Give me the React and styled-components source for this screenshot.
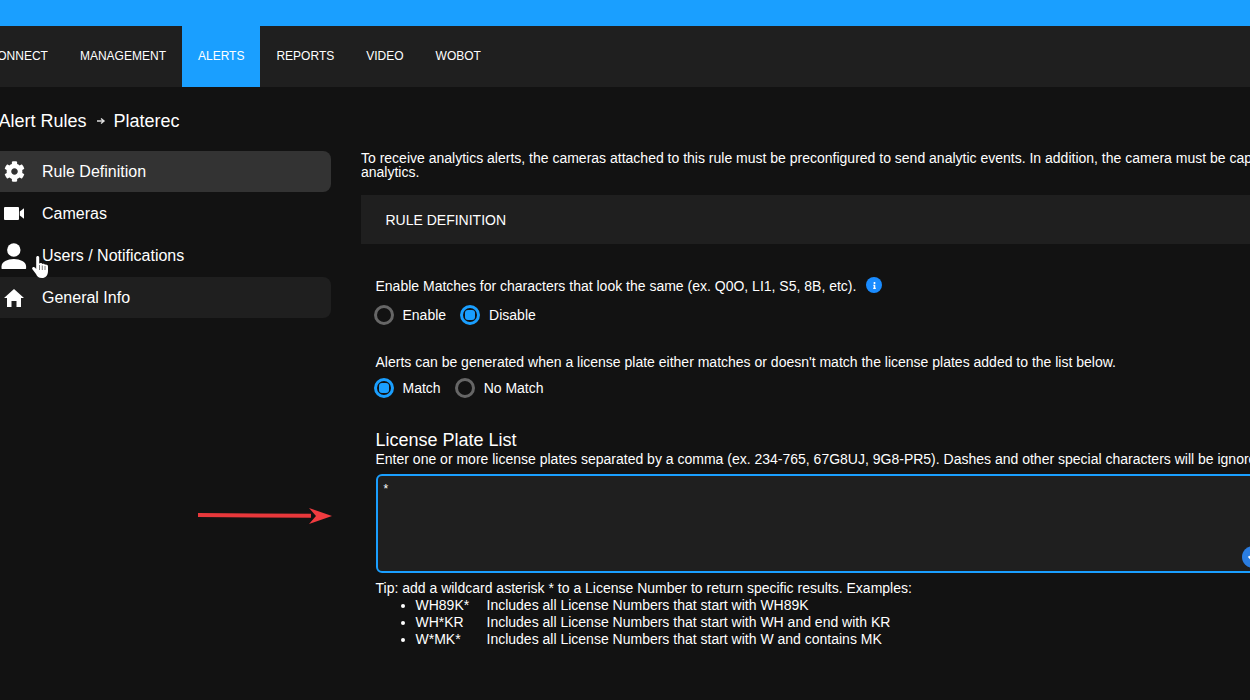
import React from 'react'
import styled, { createGlobalStyle } from 'styled-components'
import { FaCog, FaInfo, FaCheck } from 'react-icons/fa'

const navItems = ['CONNECT', 'MANAGEMENT', 'ALERTS', 'REPORTS', 'VIDEO', 'WOBOT']

const CameraIcon = () => (
  <svg width='20' height='13' viewBox='0 0 20 13' fill='#fff'>
    <rect x='0' y='0' width='15' height='13' rx='1' />
    <path d='M15.8 4.6L20 1.2v10.6L15.8 8.4z' />
  </svg>
)

const PersonIcon = () => (
  <svg width='26' height='26' viewBox='0 0 26 26' fill='#fff'>
    <circle cx='12.8' cy='7' r='6.7' />
    <path d='M.5 25.6v-2.2c0-4.600 6-7.400 12.300-7.400s12.300 2.800 12.300 7.400v2.200c0 .3-.2.4-.5.4H1c-.3 0-.5-.1-.5-.4z' />
  </svg>
)

const HomeIcon = () => (
  <svg width='20' height='18' viewBox='0 0 20 18' fill='#fff'>
    <path d='M10 0l10 9h-3v9h-4.500v-6h-5v6H3V9H0z' />
  </svg>
)

const sideItems = [
  { label: 'Rule Definition', icon: <FaCog size={21} />, state: 'active' },
  { label: 'Cameras', icon: <CameraIcon /> },
  { label: 'Users / Notifications', icon: <PersonIcon /> },
  { label: 'General Info', icon: <HomeIcon />, state: 'hover' }
]

const plates = [
  ['WH89K*', 'Includes all License Numbers that start with WH89K'],
  ['WH*KR', 'Includes all License Numbers that start with WH and end with KR'],
  ['W*MK*', 'Includes all License Numbers that start with W and contains MK']
]

const Radio = ({ label, checked, gap }) => (
  <RadioLabel $gap={gap}>
    <RadioDot $checked={checked} />
    {label}
  </RadioLabel>
)

const App = () => (
  <Page>
    <GlobalStyle />
    <TopBar />
    <Nav>
      {navItems.map(item => (
        <NavItem key={item} $active={item === 'ALERTS'}>
          {item}
        </NavItem>
      ))}
    </Nav>
    <Body>
      <Sidebar>
        <Breadcrumb>
          Alert Rules
          <CrumbArrow viewBox='0 0 10 10'>
            <path d='M1 5h6M5 2.500L8 5 5 7.500' fill='none' stroke='#ddd' strokeWidth='1.4' />
          </CrumbArrow>
          Platerec
        </Breadcrumb>
        <SideList>
          {sideItems.map(({ label, icon, state }) => (
            <SideItem key={label} $state={state}>
              <SideIcon>{icon}</SideIcon>
              {label}
            </SideItem>
          ))}
          <HandCursor viewBox='0 0 16 22'>
            <path
              d='M4.200 1.600C4.200-.4 7.200-.4 7.200 1.600V7.500C8.500 6.500 10 7 10.200 8 11.300 7.200 12.800 7.800 13 8.800 14.300 8.200 16 9 16 10.500V15C16 19.500 13.500 22 10 22 6.500 22 5.200 20.500 4 18L.4 13.300C-.6 11.600 1.400 10 3 11.500L4.200 13z'
              fill='#fff'
            />
            <path d='M7.500 9v5M10.300 9.500v4.500M13 10v4' stroke='#444' strokeWidth='.7' />
          </HandCursor>
        </SideList>
        <RedArrow viewBox='0 0 136 18'>
          <path d='M0 5l113 .8v4L0 9z' fill='#e8383b' />
          <path d='M111 0l23 8-23 8 7-8z' fill='#f13c40' />
        </RedArrow>
      </Sidebar>
      <Main>
        <Intro>
          To receive analytics alerts, the cameras attached to this rule must be preconfigured to send analytic events. In addition, the camera must be capable of sending license plate
          <br />
          analytics.
        </Intro>
        <SectionBar>RULE DEFINITION</SectionBar>
        <Form>
          <Question>
            Enable Matches for characters that look the same (ex. Q0O, LI1, S5, 8B, etc).
            <InfoBadge>
              <FaInfo size={7} />
            </InfoBadge>
          </Question>
          <RadioRow>
            <Radio label='Enable' gap={16} />
            <Radio label='Disable' checked />
          </RadioRow>
          <Question $spaced>
            Alerts can be generated when a license plate either matches or doesn't match the license plates added to the list below.
          </Question>
          <RadioRow $tight>
            <Radio label='Match' gap={16} checked />
            <Radio label='No Match' />
          </RadioRow>
          <ListTitle>License Plate List</ListTitle>
          <Hint>
            Enter one or more license plates separated by a comma (ex. 234-765, 67G8UJ, 9G8-PR5). Dashes and other special characters will be ignored.
          </Hint>
          <PlateBox>
            <PlateInput defaultValue='*' readOnly />
            <CheckBadge>
              <FaCheck size={10} />
            </CheckBadge>
          </PlateBox>
          <Tip>Tip: add a wildcard asterisk * to a License Number to return specific results. Examples:</Tip>
          <TipList>
            {plates.map(([code, text]) => (
              <TipItem key={code}>
                <TipCode>{code}</TipCode>
                {text}
              </TipItem>
            ))}
          </TipList>
        </Form>
      </Main>
    </Body>
  </Page>
)

export default App

// STYLING
const GlobalStyle = createGlobalStyle`
  html, body {
    margin: 0;
    height: 100%;
    overflow: hidden;
    background: #121212;
  }
  * {
    box-sizing: border-box;
  }
`

const Page = styled.div`
  width: 1250px;
  height: 700px;
  overflow: hidden;
  background: #121212;
  color: #fff;
  font-family: 'Liberation Sans', Arial, sans-serif;
  font-size: 14px;
`

const TopBar = styled.div`
  height: 26px;
  background: #1a9fff;
`

const Nav = styled.nav`
  display: flex;
  height: 61px;
  margin-left: -27.4px;
  background: #1f1f1f;
`

const NavItem = styled.div`
  display: flex;
  align-items: center;
  padding: 0 16px 1px;
  font-size: 12px;
  font-weight: 500;
  background: ${p => (p.$active ? '#1a9fff' : 'transparent')};
`

const Body = styled.div`
  display: flex;
  width: 1700px;
  margin-left: -20px;
`

const Sidebar = styled.aside`
  position: relative;
  flex: none;
  width: 351px;
`

const Breadcrumb = styled.div`
  display: flex;
  align-items: center;
  height: 64px;
  padding: 4px 0 0 18.500px;
  font-size: 18px;
`

const CrumbArrow = styled.svg`
  width: 10px;
  height: 10px;
  margin: 0 7.500px 0 9.500px;
`

const SideList = styled.div`
  position: relative;
  display: flex;
  flex-direction: column;
  gap: 1px;
`

const SideItem = styled.div`
  display: flex;
  align-items: center;
  height: 41px;
  border-radius: 0 8px 8px 0;
  font-size: 16px;
  background: ${p =>
    p.$state === 'active' ? '#333' : p.$state === 'hover' ? '#1f1f1f' : 'transparent'};
`

const SideIcon = styled.span`
  display: flex;
  flex: none;
  align-items: center;
  justify-content: center;
  width: 28px;
  margin: 0 14px 0 20px;
`

const HandCursor = styled.svg`
  position: absolute;
  left: 52px;
  top: 105px;
  width: 16px;
  height: 22px;
`

const RedArrow = styled.svg`
  position: absolute;
  left: 218px;
  top: 421px;
  width: 136px;
  height: 18px;
`

const Main = styled.main`
  flex: 1;
  padding: 64px 0 0 30px;
`

const Intro = styled.p`
  width: 1200px;
  margin: 0;
  line-height: 14px;
`

const SectionBar = styled.div`
  display: flex;
  align-items: center;
  height: 49px;
  margin-top: 16px;
  padding-left: 24.500px;
  background: #1f1f1f;
`

const Form = styled.div`
  padding: 33px 0 0 14.500px;
`

const Question = styled.div`
  display: flex;
  align-items: center;
  height: 17px;
  margin-top: ${p => (p.$spaced ? '28px' : 0)};
`

const InfoBadge = styled.span`
  display: flex;
  align-items: center;
  justify-content: center;
  width: 16px;
  height: 16px;
  margin: -1px 0 0 10px;
  border-radius: 50%;
  background: #1a8cff;
`

const RadioRow = styled.div`
  display: flex;
  align-items: center;
  margin-top: ${p => (p.$tight ? '8px' : '11px')};
`

const RadioLabel = styled.label`
  display: flex;
  align-items: center;
  gap: 9px;
  margin-right: ${p => p.$gap || 0}px;
`

const RadioDot = styled.span`
  position: relative;
  display: block;
  width: 20px;
  height: 20px;
  margin-left: -2px;
  border: 3px solid ${p => (p.$checked ? '#1a9fff' : '#666')};
  border-radius: 50%;
  &::after {
    content: '';
    display: ${p => (p.$checked ? 'block' : 'none')};
    position: absolute;
    inset: 2px;
    border-radius: 3px;
    background: #1a9fff;
  }
`

const ListTitle = styled.div`
  margin-top: 32px;
  font-size: 18px;
  line-height: 21px;
`

const Hint = styled.div`
  line-height: 16px;
`

const PlateBox = styled.div`
  position: relative;
  width: 1000px;
  height: 99px;
  margin-top: 7px;
`

const PlateInput = styled.textarea`
  display: block;
  width: 100%;
  height: 100%;
  padding: 6px;
  border: 2px solid #1a9fff;
  border-radius: 6px;
  outline: none;
  resize: none;
  color: #fff;
  background: #1f1f1f;
  font-family: 'Liberation Sans', Arial, sans-serif;
  font-size: 12px;
`

const CheckBadge = styled.span`
  position: absolute;
  left: 866px;
  bottom: 5px;
  display: flex;
  align-items: center;
  justify-content: center;
  width: 22px;
  height: 22px;
  border-radius: 50%;
  color: #fff;
  background: #2a7de1;
`

const Tip = styled.div`
  margin-top: 7px;
  line-height: 16px;
`

const TipList = styled.ul`
  margin: 1px 0 0;
  padding: 0 0 0 40px;
  list-style: disc;
`

const TipItem = styled.li`
  line-height: 17px;
`

const TipCode = styled.span`
  display: inline-block;
  width: 71px;
`
